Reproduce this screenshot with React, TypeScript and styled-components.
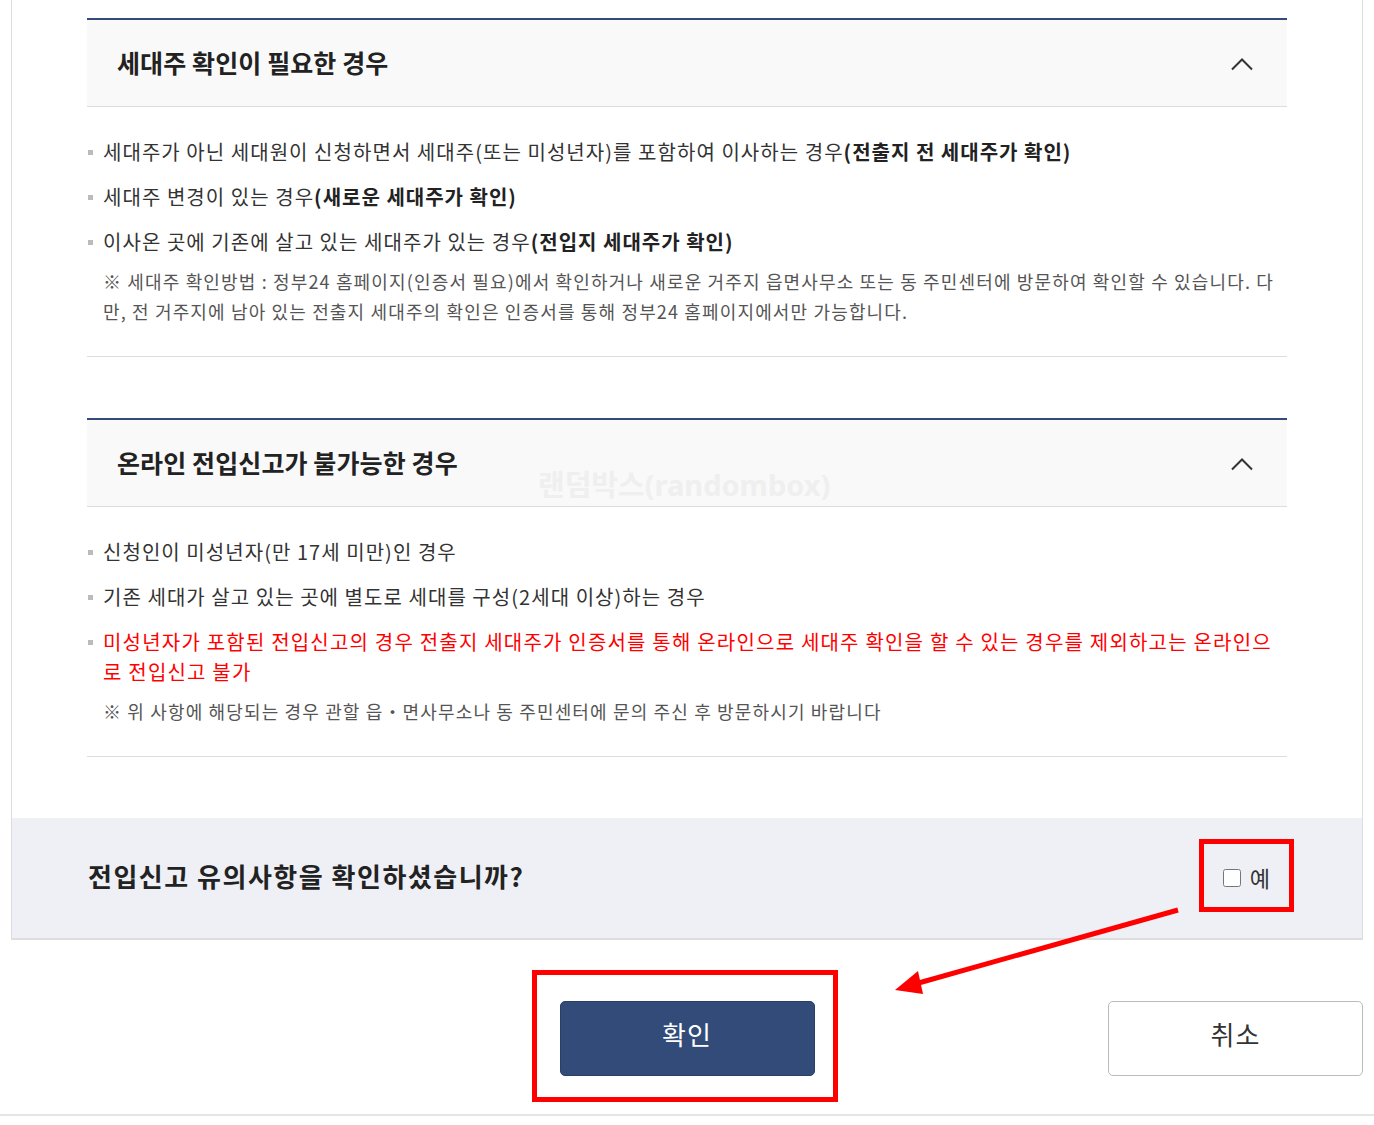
import styled, { createGlobalStyle } from "styled-components";

const GlobalStyle = createGlobalStyle`
  html, body {
    margin: 0;
    padding: 0;
    background: #ffffff;
  }
  body {
    font-family: "Noto Sans CJK KR", "Noto Sans", sans-serif;
    color: #333333;
  }
`;

const navy = "#334b78";
const lineGrey = "#dddddd";

interface Item {
  text: string;
  strong?: string;
  warn?: boolean;
}

interface Section {
  title: string;
  items: Item[];
  note: string;
}

const sections: Section[] = [
  {
    title: "세대주 확인이 필요한 경우",
    items: [
      {
        text: "세대주가 아닌 세대원이 신청하면서 세대주(또는 미성년자)를 포함하여 이사하는 경우",
        strong: "(전출지 전 세대주가 확인)",
      },
      { text: "세대주 변경이 있는 경우", strong: "(새로운 세대주가 확인)" },
      {
        text: "이사온 곳에 기존에 살고 있는 세대주가 있는 경우",
        strong: "(전입지 세대주가 확인)",
      },
    ],
    note: "※ 세대주 확인방법 : 정부24 홈페이지(인증서 필요)에서 확인하거나 새로운 거주지 읍면사무소 또는 동 주민센터에 방문하여 확인할 수 있습니다. 다만, 전 거주지에 남아 있는 전출지 세대주의 확인은 인증서를 통해 정부24 홈페이지에서만 가능합니다.",
  },
  {
    title: "온라인 전입신고가 불가능한 경우",
    items: [
      { text: "신청인이 미성년자(만 17세 미만)인 경우" },
      { text: "기존 세대가 살고 있는 곳에 별도로 세대를 구성(2세대 이상)하는 경우" },
      {
        text: "미성년자가 포함된 전입신고의 경우 전출지 세대주가 인증서를 통해 온라인으로 세대주 확인을 할 수 있는 경우를 제외하고는 온라인으로 전입신고 불가",
        warn: true,
      },
    ],
    note: "※ 위 사항에 해당되는 경우 관할 읍・면사무소나 동 주민센터에 문의 주신 후 방문하시기 바랍니다",
  },
];

const ChevronUp = () => (
  <svg width="24" height="14" viewBox="0 0 24 14" fill="none">
    <path d="M2 12.5 L12 2.5 L22 12.5" stroke="#333" strokeWidth="2" />
  </svg>
);

const App = () => {
  return (
    <Page>
      <GlobalStyle />
      <Panel>
        <Content>
          {sections.map((section) => (
            <Block key={section.title}>
              <Header>
                <Title>{section.title}</Title>
                <ChevronUp />
              </Header>
              <Body>
                <List>
                  {section.items.map((item) => (
                    <ListItem key={item.text} $warn={item.warn}>
                      {item.text}
                      {item.strong && <strong>{item.strong}</strong>}
                    </ListItem>
                  ))}
                </List>
                <Note>{section.note}</Note>
              </Body>
            </Block>
          ))}
        </Content>
        <ConfirmBar>
          <Question>전입신고 유의사항을 확인하셨습니까?</Question>
          <CheckLabel>
            <input type="checkbox" />
            예
          </CheckLabel>
        </ConfirmBar>
      </Panel>
      <ButtonRow>
        <PrimaryButton>확인</PrimaryButton>
        <OutlineButton>취소</OutlineButton>
      </ButtonRow>
      <BottomLine />

      <Watermark>랜덤박스(randombox)</Watermark>
      <Annotations width="1374" height="1125" viewBox="0 0 1374 1125">
        <rect x="1201.5" y="841.5" width="90" height="68" fill="none" stroke="#ff0000" strokeWidth="5" />
        <rect x="534.5" y="972.5" width="301" height="127" fill="none" stroke="#ff0000" strokeWidth="5" />
        <line x1="1178" y1="910" x2="915" y2="984" stroke="#ff0000" strokeWidth="5" />
        <polygon points="895,990 918,971 923,994" fill="#ff0000" />
      </Annotations>
    </Page>
  );
};

export default App;

const Page = styled.div`
  position: relative;
  width: 1374px;
  min-height: 1125px;
`;

const Panel = styled.div`
  margin: 0 11px;
  border-left: 1px solid ${lineGrey};
  border-right: 1px solid ${lineGrey};
  border-bottom: 2px solid ${lineGrey};
  background: #ffffff;
`;

const Content = styled.div`
  padding: 18px 75px 61px;
  display: flex;
  flex-direction: column;
  gap: 61px;
`;

const Block = styled.section`
  border-top: 2px solid ${navy};
  border-bottom: 1px solid ${lineGrey};
`;

const Header = styled.div`
  height: 86px;
  display: flex;
  align-items: center;
  justify-content: space-between;
  padding: 0 33px 0 30px;
  background: #f9f9f9;
  border-bottom: 1px solid ${lineGrey};

  svg {
    margin-top: 2px;
  }
`;

const Title = styled.h3`
  margin: 0 0 2px;
  font-size: 25px;
  font-weight: 700;
  letter-spacing: 0.1px;
  color: #222222;
`;

const Body = styled.div`
  padding: 30px 8px 30px 0;
`;

const List = styled.ul`
  margin: 0;
  padding: 0;
  list-style: none;
  display: flex;
  flex-direction: column;
  gap: 15px;
`;

const ListItem = styled.li<{ $warn?: boolean }>`
  position: relative;
  padding-left: 16px;
  font-size: 20px;
  line-height: 30px;
  letter-spacing: ${({ $warn }) => ($warn ? "1.2px" : "1.05px")};
  color: ${({ $warn }) => ($warn ? "#ff0000" : "#333333")};

  &::before {
    content: "";
    position: absolute;
    left: 1px;
    top: 13px;
    width: 5px;
    height: 5px;
    background: #bbbbbb;
  }

  strong {
    font-weight: 700;
    letter-spacing: 1px;
    color: #222222;
  }
`;

const Note = styled.p`
  margin: 9px 0 0;
  padding-left: 16px;
  font-size: 18px;
  line-height: 30px;
  letter-spacing: 1.15px;
  color: #555555;
`;

const ConfirmBar = styled.div`
  height: 120px;
  display: flex;
  align-items: center;
  justify-content: space-between;
  padding: 0 92px 0 76px;
  background: #eef0f5;
`;

const Question = styled.p`
  margin: 0 0 5px;
  font-size: 26px;
  font-weight: 700;
  letter-spacing: 1.5px;
  color: #222222;
`;

const CheckLabel = styled.label`
  display: flex;
  align-items: center;
  gap: 9px;
  margin-bottom: 3px;
  font-size: 22px;
  color: #333333;

  input {
    width: 18px;
    height: 18px;
    margin: 2px 0 0;
  }
`;

const ButtonRow = styled.div`
  display: grid;
  grid-template-columns: 1fr 255px 1fr;
  padding: 61px 11px 0;
  height: 75px;
`;

const BaseButton = styled.button`
  width: 255px;
  height: 75px;
  padding: 0 0 10px;
  border-radius: 5px;
  font-family: "Noto Sans CJK KR", "Noto Sans", sans-serif;
  font-size: 26px;
  letter-spacing: 1px;
  cursor: pointer;
`;

const PrimaryButton = styled(BaseButton)`
  grid-column: 2;
  background: ${navy};
  border: 1px solid #2a3f66;
  color: #ffffff;
`;

const OutlineButton = styled(BaseButton)`
  grid-column: 3;
  justify-self: end;
  background: #ffffff;
  border: 1px solid #bbbbbb;
  color: #333333;
`;

const BottomLine = styled.div`
  margin-top: 38px;
  height: 2px;
  background: #e6e6e6;
`;

const Watermark = styled.div`
  position: absolute;
  left: 538px;
  top: 462px;
  font-family: "Noto Sans", "Noto Sans CJK KR", sans-serif;
  font-size: 29px;
  font-weight: 700;
  color: #efefef;
  pointer-events: none;
`;

const Annotations = styled.svg`
  position: absolute;
  left: 0;
  top: 0;
  pointer-events: none;
`;
